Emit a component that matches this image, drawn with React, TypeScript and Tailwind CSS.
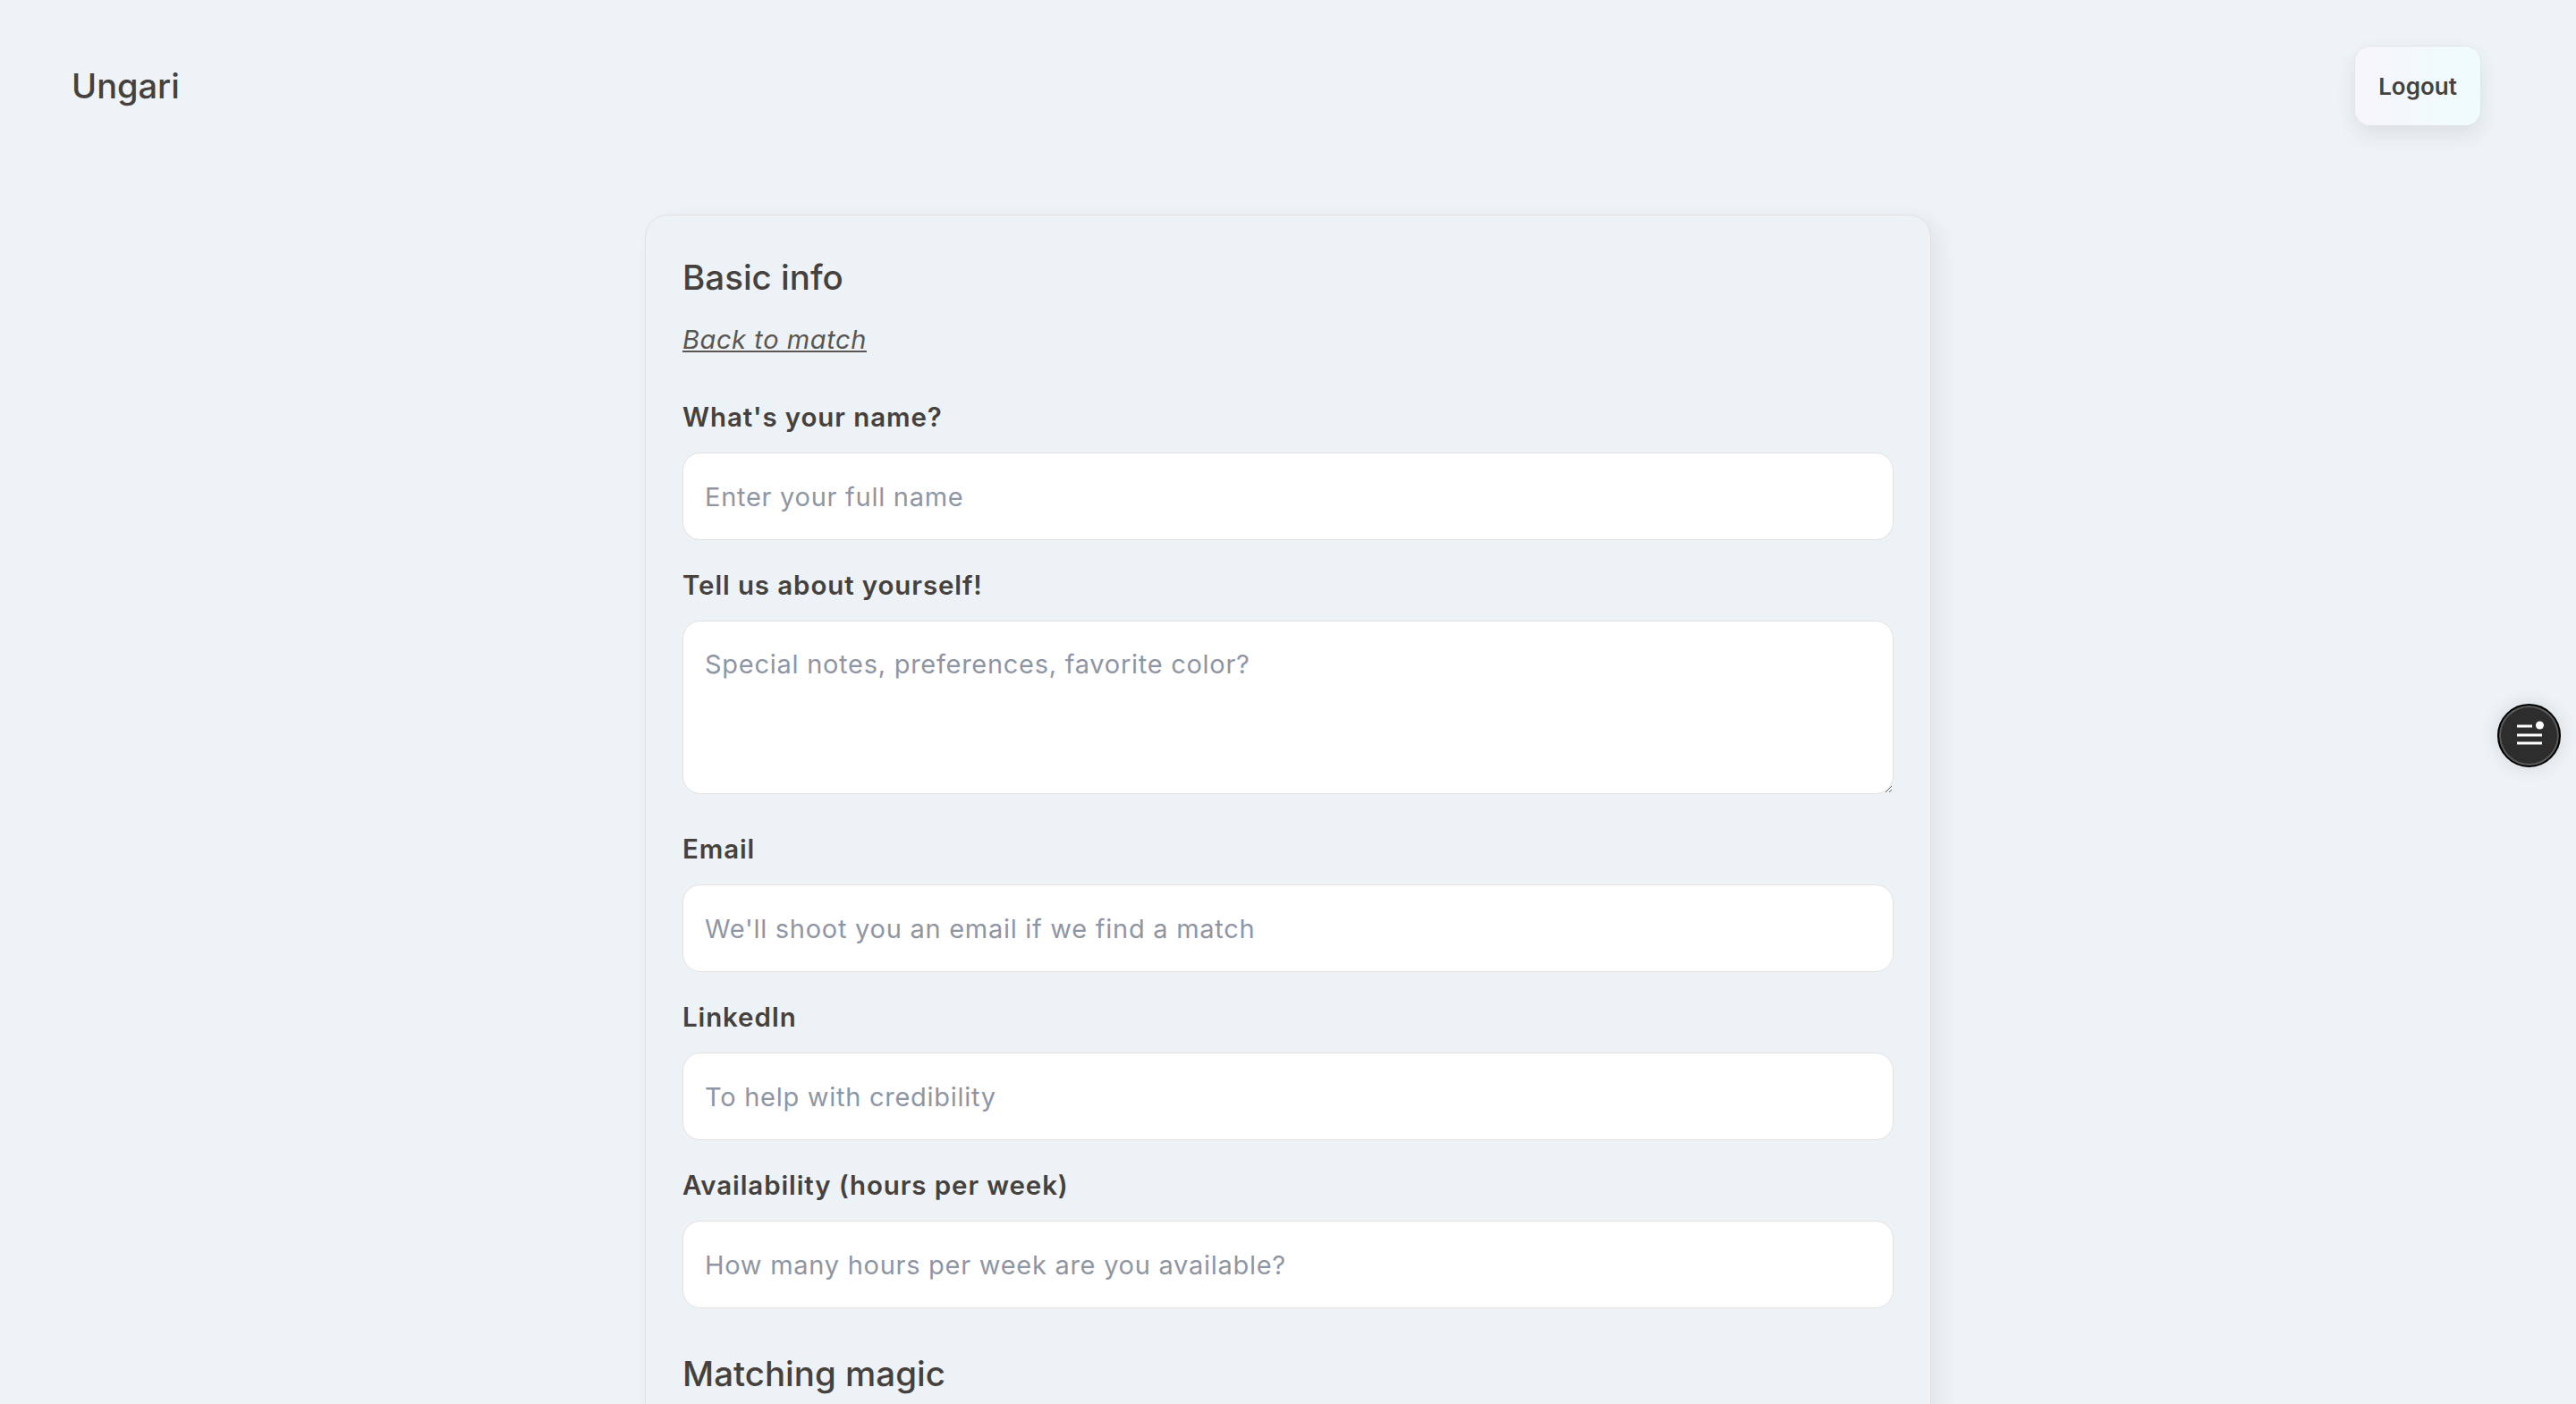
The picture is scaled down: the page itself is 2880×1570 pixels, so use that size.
import React from 'react';

const fields = [
  { label: "What's your name?", placeholder: 'Enter your full name' },
  { label: 'Tell us about yourself!', placeholder: 'Special notes, preferences, favorite color?', multiline: true },
  { label: 'Email', placeholder: "We'll shoot you an email if we find a match" },
  { label: 'LinkedIn', placeholder: 'To help with credibility' },
  { label: 'Availability (hours per week)', placeholder: 'How many hours per week are you available?' },
];

const inputClass =
  'w-full rounded-[20px] border border-[#e4e0e0] bg-white px-[24px] text-[29px] text-[#46413d] outline-none placeholder:text-[#8f96a3] tracking-[0.025em]';

function Field({ label, placeholder, multiline, gap }: { label: string; placeholder: string; multiline?: boolean; gap: string }) {
  return (
    <div className={gap}>
      <label className="block text-[29.5px] leading-[35px] font-semibold tracking-[0.03em]">{label}</label>
      {multiline ? (
        <textarea
          placeholder={placeholder}
          className={`${inputClass} mt-[22px] block h-[194px] py-[26px] leading-[44px]`}
        />
      ) : (
        <input type="text" placeholder={placeholder} className={`${inputClass} mt-[22px] block h-[98px]`} />
      )}
    </div>
  );
}

export default function App() {
  return (
    <div className="min-h-screen bg-[#eef3f8] font-['Inter',sans-serif] text-[#46413d]">
      {/* Header */}
      <header className="flex items-center justify-between pl-[80px] pr-[106px] pt-[51px]">
        <span className="text-[38px] font-medium">Ungari</span>
        <button className="flex h-[90px] w-[142px] items-center justify-center rounded-[18px] border border-[#e4e4e8] bg-gradient-to-r from-[#f6f5fb] to-[#effcfd] text-[26px] font-semibold shadow-[0_10px_24px_rgba(0,0,0,0.08)]">
          Logout
        </button>
      </header>

      {/* Form card */}
      <main className="pb-[80px] pt-[99px]">
        <div className="mx-auto w-[1438px] rounded-[25px] border border-[#e3dfdf] bg-[#edf2f7] px-[41px] pb-[400px] pt-[46px] shadow-[10px_6px_24px_rgba(0,0,0,0.06)]">
          <h2 className="text-[38.5px] leading-[47px] font-medium">Basic info</h2>
          <a href="#" className="mt-[28px] block w-fit text-[29px] leading-[35px] italic tracking-[0.02em] text-[#5b5652] underline">
            Back to match
          </a>

          {fields.map((f, i) => (
            <Field key={f.label} gap={i === 0 ? 'mt-[52px]' : i === 2 ? 'mt-[44px]' : 'mt-[33px]'} {...f} />
          ))}

          <h2 className="mt-[50px] text-[38.5px] leading-[47px] font-medium">Matching magic</h2>
        </div>
      </main>

      {/* Floating menu button */}
      <button className="fixed right-[17px] top-[787px] h-[71px] w-[71px] rounded-full border-2 border-black bg-[#2d2d2d] shadow-[inset_0_0_0_2px_#5a5a5a,0_0_22px_rgba(0,0,0,0.12)]">
        <svg viewBox="0 0 71 71" className="absolute -left-[2px] -top-[2px] h-[71px] w-[71px]" fill="none">
          <path d="M22 25H39M22 35H50M22 44H50" stroke="white" strokeWidth="3" />
          <circle cx="47.5" cy="24" r="4.5" fill="white" />
        </svg>
      </button>
    </div>
  );
}
